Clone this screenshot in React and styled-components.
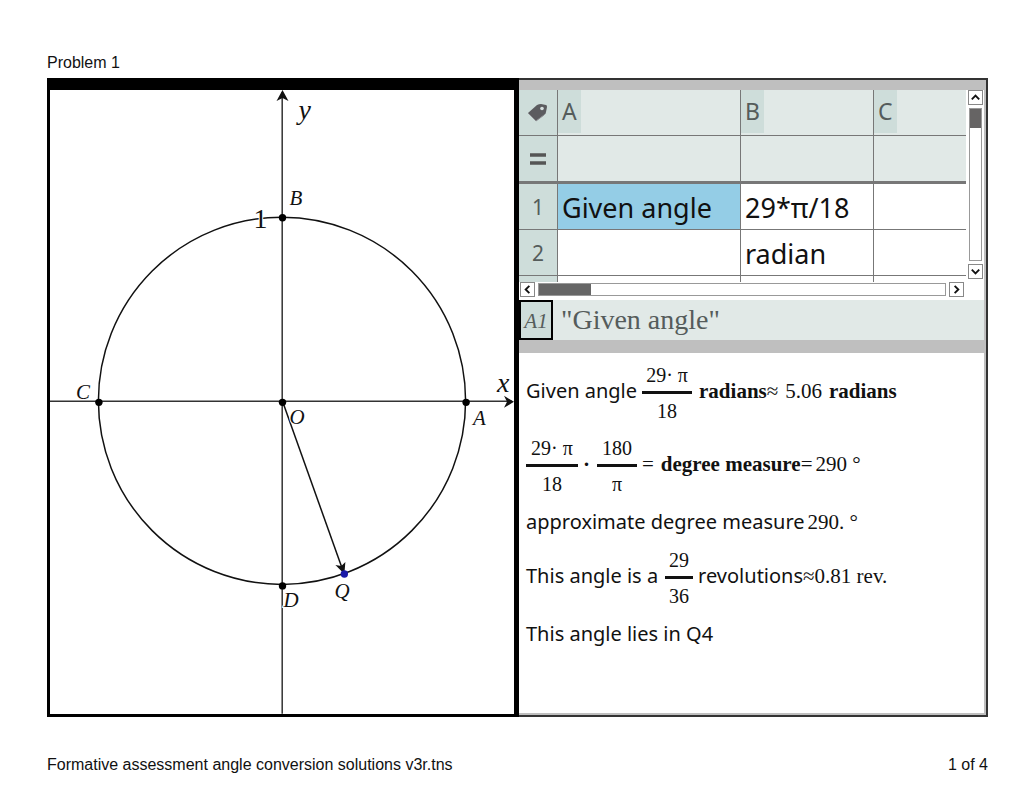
import React, { useState } from 'react';
import styled, { createGlobalStyle } from 'styled-components';

const COLUMNS = [
  { id: 0, name: 'A' },
  { id: 1, name: 'B' },
  { id: 2, name: 'C' },
];

const ROWS = [
  { id: 1, cells: ['Given angle', '29*π/18', ''] },
  { id: 2, cells: ['', 'radian', ''] },
];

const POINTS = [
  { id: 'A', x: 417, y: 313, labelX: 424, labelY: 336 },
  { id: 'B', x: 233, y: 128, labelX: 240, labelY: 115 },
  { id: 'C', x: 49, y: 313, labelX: 26, labelY: 310 },
  { id: 'D', x: 233, y: 497, labelX: 234, labelY: 518 },
  { id: 'O', x: 233, y: 313, labelX: 240, labelY: 335 },
  { id: 'Q', x: 295, y: 485, labelX: 285, labelY: 509, color: '#1a1aa8' },
];

const ARROWS = {
  up: 'M3 9 L7 5 L11 9',
  down: 'M3 5 L7 9 L11 5',
  left: 'M9 3 L5 7 L9 11',
  right: 'M5 3 L9 7 L5 11',
};

const ScrollArrow = ({ direction }) => (
  <ScrollBtn type="button" aria-label={`Scroll ${direction}`}>
    <svg width="13" height="13" viewBox="0 0 14 14">
      <path d={ARROWS[direction]} fill="none" stroke="#111" strokeWidth="2" />
    </svg>
  </ScrollBtn>
);

const Fraction = ({ top, bottom, width, space }) => (
  <FractionBox $width={width} $space={space}>
    <Numerator>{top}</Numerator>
    <Denominator>{bottom}</Denominator>
  </FractionBox>
);

const UnitCircle = () => (
  <Graph viewBox="0 0 465 625" role="img" aria-label="Unit circle">
    <circle cx="232.5" cy="311.5" r="184" fill="none" stroke="#111" strokeWidth="1.5" />
    <path d="M0 312 H463 M232.7 2 V625" stroke="#333" strokeWidth="1.5" />
    <path d="M233 0 L227 11 L233 8 L239 11 Z" fill="#111" />
    <path d="M465 312.5 L455 306.5 L458 312.5 L455 318.5 Z" fill="#111" />
    <path d="M233 312 L293 480" stroke="#111" strokeWidth="1.5" />
    <path d="M295 485 L286 476 L292 477 L296 473 Z" fill="#111" />
    <AxisLabel x="249" y="29">y</AxisLabel>
    <AxisLabel x="448" y="303">x</AxisLabel>
    <UnitLabel x="204" y="138">1</UnitLabel>
    {POINTS.map(({ id, x, y, labelX, labelY, color }) => (
      <g key={id}>
        <PointLabel x={labelX} y={labelY}>
          {id}
        </PointLabel>
        <circle cx={x} cy={y} r="3.7" fill={color || '#000'} />
      </g>
    ))}
  </Graph>
);

const Spreadsheet = () => (
  <SheetArea>
    <SheetTop>
      <Sheet>
        <colgroup>
          <Col $width="39px" />
          <Col $width="183px" />
          <Col $width="133px" />
          <Col />
        </colgroup>
        <thead>
          <tr>
            <RowHead aria-label="Column names">
              <TagIcon viewBox="0 0 22 20">
                <path
                  d="M1 10 L10 2 Q12 1 14 1 L19 2 Q20 2 20 4 L19 9 Q19 11 17 12 L9 18 Z"
                  fill="#5b5b5f"
                />
                <path d="M1 10 L9 18 L17 12" fill="none" stroke="#8b8b90" />
                <circle cx="15" cy="5.5" r="1.8" fill="#d6dfdf" />
              </TagIcon>
            </RowHead>
            {COLUMNS.map(({ id, name }) => (
              <ColumnHead key={id}>
                <ColumnName>{name}</ColumnName>
              </ColumnHead>
            ))}
          </tr>
          <tr>
            <RowHead $thick aria-label="Formula">
              <EqualsIcon viewBox="0 0 16 12">
                <path d="M0 2 H16 M0 10 H16" stroke="#555" strokeWidth="3.5" />
              </EqualsIcon>
            </RowHead>
            {COLUMNS.map(({ id }) => (
              <FormulaCell key={id} />
            ))}
          </tr>
        </thead>
        <tbody>
          {ROWS.map(({ id, cells }) => (
            <tr key={id}>
              <RowHead>{id}</RowHead>
              {cells.map((text, index) => (
                <Cell key={index} $selected={id === 1 && index === 0}>
                  {text}
                </Cell>
              ))}
            </tr>
          ))}
          <tr>
            <RowHead $short />
            {COLUMNS.map(({ id }) => (
              <Cell key={id} $short />
            ))}
          </tr>
        </tbody>
      </Sheet>
      <VerticalScroll>
        <ScrollArrow direction="up" />
        <VerticalTrack>
          <VerticalThumb />
        </VerticalTrack>
        <ScrollArrow direction="down" />
      </VerticalScroll>
    </SheetTop>
    <HorizontalScroll>
      <ScrollArrow direction="left" />
      <HorizontalTrack>
        <HorizontalThumb />
      </HorizontalTrack>
      <ScrollArrow direction="right" />
    </HorizontalScroll>
  </SheetArea>
);

const App = () => {
  const [entry, setEntry] = useState('"Given angle"');

  return (
    <Page>
      <GlobalStyle />
      <Title>Problem 1</Title>
      <Frame>
        <GraphPane>
          <UnitCircle />
        </GraphPane>
        <WorkPane>
          <Spreadsheet />
          <EntryBar>
            <EntryLabel htmlFor="entry">A1</EntryLabel>
            <EntryInput
              id="entry"
              value={entry}
              onChange={e => setEntry(e.target.value)}
            />
          </EntryBar>
          <Notes>
            <Line>
              <Sans>Given angle</Sans>
              <Fraction top="29· π" bottom="18" width="50px" space="5px" />
              <Bold $space="7px">radians</Bold>
              <Serif>≈</Serif>
              <Serif $space="7px">5.06</Serif>
              <Bold $space="7px">radians</Bold>
            </Line>
            <Line>
              <Fraction top="29· π" bottom="18" width="52px" />
              <Bold $space="5px">·</Bold>
              <Fraction top="180" bottom="π" width="40px" space="7px" />
              <Serif $space="5px">=</Serif>
              <Bold $space="7px">degree measure</Bold>
              <Serif>=</Serif>
              <Serif $space="3px">290 °</Serif>
            </Line>
            <Line $plain>
              <Sans>approximate degree measure</Sans>
              <Serif $space="3px">290. °</Serif>
            </Line>
            <Line>
              <Sans>This angle is a</Sans>
              <Fraction top="29" bottom="36" width="28px" space="7px" />
              <Sans $space="5px">revolutions</Sans>
              <Serif>≈0.81 rev.</Serif>
            </Line>
            <Line $plain>
              <Sans>This angle lies in Q4</Sans>
            </Line>
          </Notes>
        </WorkPane>
      </Frame>
      <Footer>
        <span>Formative assessment angle conversion solutions v3r.tns</span>
        <span>1 of 4</span>
      </Footer>
    </Page>
  );
};

export default App;

const GlobalStyle = createGlobalStyle`
  * {
    box-sizing: border-box;
  }

  body {
    margin: 0;
    background-color: #ffffff;
    color: #111111;
    font-family: 'Liberation Sans', Arial, sans-serif;
  }
`;

const Page = styled.main`
  padding: 53px 46px 24px 47px;
  font-size: 16px;
  line-height: 20px;
`;

const Title = styled.h1`
  margin: 0 0 5px;
  font-size: 16px;
  font-weight: 400;
`;

const Frame = styled.div`
  display: grid;
  grid-template-columns: 472fr 469fr;
`;

const GraphPane = styled.section`
  border: 3px solid #000000;
  border-top-width: 12px;
  border-right-width: 5px;
`;

const Graph = styled.svg`
  display: block;
  width: 100%;
`;

const PointLabel = styled.text`
  font-family: 'Liberation Serif', serif;
  font-size: 21px;
  font-style: italic;
  fill: #111111;
  stroke: #ffffff;
  stroke-width: 2px;
  paint-order: stroke;
`;

const AxisLabel = styled(PointLabel)`
  font-size: 28px;
`;

const UnitLabel = styled(PointLabel)`
  font-size: 28px;
  font-style: normal;
`;

const WorkPane = styled.section`
  display: flex;
  flex-direction: column;
  border: 2px solid #333333;
  border-left: none;
  box-shadow: inset -2px -2px 0 #bfbfbf;
  padding: 0 2px 2px 0;
  min-width: 0;
`;

const SheetArea = styled.div`
  border-top: 10px solid #bfbfbf;
  margin-right: -2px;
  padding-right: 2px;
`;

const SheetTop = styled.div`
  display: flex;
`;

const Sheet = styled.table`
  flex: 1;
  table-layout: fixed;
  border-collapse: separate;
  border-spacing: 0;
  font-family: 'Noto Sans', sans-serif;
`;

const Col = styled.col`
  width: ${({ $width }) => $width || 'auto'};
`;

const RowHead = styled.th`
  height: ${({ $short, $thick }) => ($short ? '6px' : $thick ? '48px' : '46px')};
  padding: 0;
  border-right: 1px solid #777777;
  border-bottom: ${({ $short, $thick }) =>
    $short ? 'none' : $thick ? '3px solid #777777' : '1px solid #777777'};
  background-color: #ceddda;
  color: #555c5b;
  font-size: 21px;
  font-weight: 400;
  line-height: 28px;
  text-align: center;
`;

const TagIcon = styled.svg`
  display: block;
  width: 22px;
  height: 20px;
  margin: 0 auto;
`;

const EqualsIcon = styled.svg`
  display: block;
  width: 16px;
  height: 12px;
  margin: 0 auto;
`;

const ColumnHead = styled.th`
  padding: 0;
  border-right: 1px solid #777777;
  border-bottom: 1px solid #777777;
  background-color: #e1e9e7;
  vertical-align: top;
  text-align: left;

  &:last-child {
    border-right: none;
  }
`;

const ColumnName = styled.span`
  display: block;
  width: 23px;
  height: 43px;
  padding-left: 4px;
  background-color: #ceddda;
  color: #555c5b;
  font-size: 23px;
  font-weight: 400;
  line-height: 42px;
`;

const FormulaCell = styled.td`
  border-right: 1px solid #777777;
  border-bottom: 3px solid #777777;
  background-color: #e1e9e7;

  &:last-child {
    border-right: none;
  }
`;

const Cell = styled.td`
  height: ${({ $short }) => ($short ? '6px' : '46px')};
  padding: ${({ $short }) => ($short ? '0' : '2px 0 0 4px')};
  border-right: 1px solid #777777;
  border-bottom: ${({ $short }) => ($short ? 'none' : '1px solid #777777')};
  background-color: ${({ $selected }) => ($selected ? '#94cde6' : '#ffffff')};
  font-size: 27px;
  line-height: 40px;
  white-space: nowrap;

  &:last-child {
    border-right: none;
  }
`;

const ScrollBtn = styled.button`
  display: flex;
  align-items: center;
  justify-content: center;
  width: 15px;
  height: 15px;
  flex-shrink: 0;
  padding: 0;
  border: 1px solid #888888;
  background-color: #ffffff;
`;

const VerticalScroll = styled.div`
  display: flex;
  flex-direction: column;
  align-items: center;
  gap: 3px;
  width: 18px;
  padding: 0 0 3px;
`;

const VerticalTrack = styled.div`
  flex: 1;
  width: 13px;
  border: 1px solid #999999;
`;

const VerticalThumb = styled.div`
  height: 19px;
  background-color: #666464;
`;

const HorizontalScroll = styled.div`
  display: flex;
  align-items: center;
  gap: 3px;
  padding: 0 20px 3px 1px;
`;

const HorizontalTrack = styled.div`
  flex: 1;
  height: 13px;
  border: 1px solid #999999;
`;

const HorizontalThumb = styled.div`
  width: 52px;
  height: 100%;
  background-color: #666666;
`;

const EntryBar = styled.div`
  display: flex;
  height: 53px;
  border-bottom: 13px solid #bfbfbf;
  background-color: #e1e9e7;
  color: #555c5b;
  font-family: 'Liberation Serif', serif;
`;

const EntryLabel = styled.label`
  width: 34px;
  border: 2px solid #000000;
  background-color: #ceddda;
  font-size: 21px;
  font-style: italic;
  line-height: 38px;
  text-align: center;
`;

const EntryInput = styled.input`
  flex: 1;
  min-width: 0;
  padding: 0 0 0 8px;
  border: none;
  background-color: transparent;
  color: inherit;
  font-family: inherit;
  font-size: 28px;
  outline: none;
`;

const Notes = styled.div`
  display: flex;
  flex: 1;
  flex-direction: column;
  gap: 6px;
  padding: 4px 0 0 7px;
`;

const Line = styled.div`
  display: flex;
  align-items: center;
  padding-top: ${({ $plain }) => ($plain ? '5px' : '0')};
  line-height: 28px;
  white-space: pre;
`;

const Sans = styled.span`
  margin-left: ${({ $space }) => $space || '0'};
  font-family: 'Noto Sans', sans-serif;
  font-size: 20px;
`;

const Serif = styled.span`
  margin-left: ${({ $space }) => $space || '0'};
  font-family: 'Liberation Serif', serif;
  font-size: 21px;
`;

const Bold = styled(Serif)`
  font-weight: 700;
`;

const FractionBox = styled.span`
  display: flex;
  flex-direction: column;
  width: ${({ $width }) => $width};
  margin-left: ${({ $space }) => $space || '0'};
  font-family: 'Liberation Serif', serif;
  font-size: 20px;
  text-align: center;
`;

const Numerator = styled.span`
  padding: 4px 0 2px;
  border-bottom: 3px solid #111111;
  line-height: 28px;
`;

const Denominator = styled.span`
  padding: 5px 0 1px;
  line-height: 24px;
`;

const Footer = styled.footer`
  display: flex;
  justify-content: space-between;
  margin-top: 38px;
`;
